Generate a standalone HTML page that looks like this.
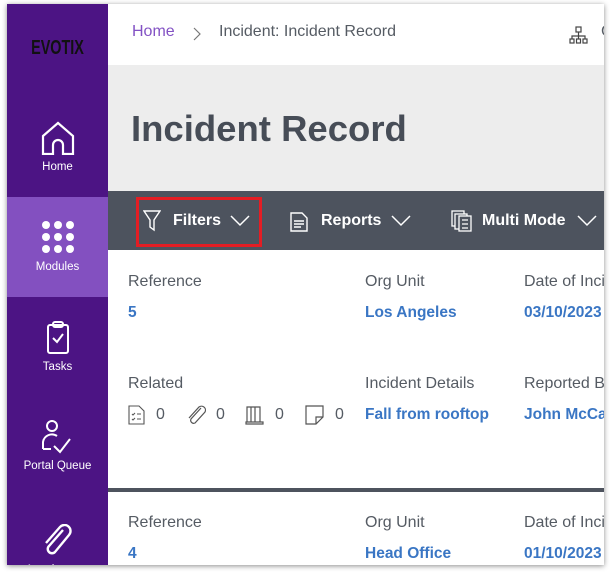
<!DOCTYPE html>
<html><head><style>
*{margin:0;padding:0;box-sizing:border-box}
body{width:615px;height:573px;background:#fff;font-family:"Liberation Sans",sans-serif;position:relative;overflow:hidden}
.frame{position:absolute;left:7px;top:4px;width:597px;height:561px;overflow:hidden;box-shadow:0 1px 5px rgba(0,0,0,.45);background:#fff}
.side{position:absolute;left:0;top:0;width:101px;height:561px;background:#4c1484}
.logo{position:absolute;left:0;width:101px;top:33px;text-align:center;font-weight:bold;font-size:20px;color:#111;transform:scaleX(.72)}
.nav{position:absolute;left:0;width:101px;text-align:center;color:#fff;font-size:11.5px}
.nav svg{display:block;margin:0 auto 6px}
.act{background:#8350c0}
.abs{position:absolute}
.lbl{color:#555b63;font-size:16px}
.val{color:#3a76c4;font-size:15.5px;font-weight:bold}
</style></head><body>
<div class="frame">
 <div class="side">
  <div class="logo">EVOTIX</div>
  <div class="nav" style="top:117px"><svg width="34" height="34" viewBox="0 0 34 34" fill="none" stroke="#fff" stroke-width="2.2"><path d="M2 15 L17 2 L32 15 V33 H22 V24 a5 5 0 0 0 -10 0 V33 H2 Z"/></svg>Home</div>
  <div class="nav act" style="top:193px;height:100px;padding-top:24px"><svg width="34" height="34" viewBox="0 0 34 34" fill="#fff"><circle cx="5" cy="4" r="4"/><circle cx="17" cy="4" r="4"/><circle cx="29" cy="4" r="4"/><circle cx="5" cy="16" r="4"/><circle cx="17" cy="16" r="4"/><circle cx="29" cy="16" r="4"/><circle cx="5" cy="28" r="4"/><circle cx="17" cy="28" r="4"/><circle cx="29" cy="28" r="4"/></svg>Modules</div>
  <div class="nav" style="top:317px"><svg width="24" height="34" viewBox="0 0 24 34" fill="none" stroke="#fff" stroke-width="2"><rect x="2" y="4" width="20" height="28" rx="2"/><rect x="7" y="1" width="10" height="5" rx="2"/><path d="M7 17 L11 21 L17 13"/></svg>Tasks</div>
  <div class="nav" style="top:416px"><svg width="34" height="34" viewBox="0 0 34 34" fill="none" stroke="#fff" stroke-width="2"><circle cx="11" cy="6" r="5"/><path d="M2 29 V22 a9 9 0 0 1 14 -6 M2 29 H10 M13 26 L19 32 L29 19"/></svg>Portal Queue</div>
  <div class="nav" style="top:520px"><svg width="34" height="34" viewBox="0 0 34 34" fill="none" stroke="#fff" stroke-width="2.4"><path d="M22 6 L8 22 a4 4 0 0 0 6 6 L28 11 a6 6 0 0 0 -9 -8 L5 19"/></svg>Attachments</div>
 </div>
 <div class="abs" style="left:101px;top:0;width:496px;height:61px;background:#fff"></div>
 <div class="abs" style="left:125px;top:19px;font-size:16px;color:#8352c4">Home</div>
 <svg class="abs" style="left:186px;top:23px" width="8" height="14" viewBox="0 0 8 14" fill="none" stroke="#777" stroke-width="1.2"><path d="M1 1L7 7L1 13"/></svg>
 <div class="abs" style="left:212px;top:19px;font-size:16px;color:#555b63">Incident: Incident Record</div>
 <svg class="abs" style="left:562px;top:22px" width="20" height="20" viewBox="0 0 20 20" fill="none" stroke="#444" stroke-width="1.2"><rect x="7" y="1" width="5" height="5"/><path d="M9.5 6V10M3 13V10H16V13M9.5 10V13"/><rect x="1" y="13" width="4" height="4"/><rect x="7.5" y="13" width="4" height="4"/><rect x="14" y="13" width="4" height="4"/></svg>
 <div class="abs" style="left:594px;top:19px;font-size:16px;color:#555b63">C</div>
 <div class="abs" style="left:101px;top:61px;width:496px;height:126px;background:#ededed"></div>
 <div class="abs" style="left:124px;top:104px;font-size:36.5px;font-weight:bold;color:#474d57">Incident Record</div>
 <div class="abs" style="left:101px;top:187px;width:496px;height:59px;background:#4d535e"></div>
 <div class="abs" style="left:129px;top:193px;width:126px;height:50px;border:3px solid #e41d24"></div>
 <svg class="abs" style="left:136px;top:206px" width="18" height="22" viewBox="0 0 18 22" fill="none" stroke="#fff" stroke-width="1.4"><path d="M1 1H17L11 10V20L7 17V10Z"/></svg>
 <div class="abs" style="left:166px;top:208px;color:#fff;font-weight:bold;font-size:16px">Filters</div>
 <svg class="abs" style="left:223px;top:211px" width="20" height="12" viewBox="0 0 20 12" fill="none" stroke="#fff" stroke-width="1.5"><path d="M1 1L10 10L19 1"/></svg>
 <svg class="abs" style="left:283px;top:208px" width="18" height="20" viewBox="0 0 18 20" fill="none" stroke="#fff" stroke-width="1.4"><path d="M1 1H12L17 6V19H1Z M4 9H14M4 12H14M4 15H11"/></svg>
 <div class="abs" style="left:314px;top:208px;color:#fff;font-weight:bold;font-size:16px">Reports</div>
 <svg class="abs" style="left:384px;top:211px" width="20" height="12" viewBox="0 0 20 12" fill="none" stroke="#fff" stroke-width="1.5"><path d="M1 1L10 10L19 1"/></svg>
 <svg class="abs" style="left:444px;top:206px" width="22" height="22" viewBox="0 0 22 22" fill="none" stroke="#fff" stroke-width="1.3"><rect x="1" y="1" width="12" height="15"/><rect x="4" y="4" width="12" height="15" fill="#4d535e"/><rect x="8" y="6" width="12" height="15" fill="#4d535e"/><path d="M11 10H17M11 14H17M11 18H17"/></svg>
 <div class="abs" style="left:475px;top:208px;color:#fff;font-weight:bold;font-size:16px">Multi Mode</div>
 <svg class="abs" style="left:570px;top:211px" width="20" height="12" viewBox="0 0 20 12" fill="none" stroke="#fff" stroke-width="1.5"><path d="M1 1L10 10L19 1"/></svg>

 <div class="abs lbl" style="left:121px;top:269px">Reference</div>
 <div class="abs lbl" style="left:358px;top:269px">Org Unit</div>
 <div class="abs lbl" style="left:517px;top:269px;white-space:nowrap">Date of Incident</div>
 <div class="abs val" style="left:121px;top:300px">5</div>
 <div class="abs val" style="left:358px;top:300px">Los Angeles</div>
 <div class="abs val" style="left:517px;top:300px">03/10/2023</div>
 <div class="abs lbl" style="left:121px;top:371px">Related</div>
 <div class="abs lbl" style="left:358px;top:371px">Incident Details</div>
 <div class="abs lbl" style="left:517px;top:371px;white-space:nowrap">Reported By</div>
 <svg class="abs" style="left:121px;top:401px" width="18" height="20" viewBox="0 0 18 20" fill="none" stroke="#555" stroke-width="1.1"><path d="M1 1H11L16 6V19H1Z M4 9L5 10L7 8M9 9H13M4 14L5 15L7 13M9 14H13"/></svg>
 <div class="abs lbl" style="left:149px;top:402px">0</div>
 <svg class="abs" style="left:179px;top:401px" width="22" height="20" viewBox="0 0 22 20" fill="none" stroke="#555" stroke-width="1.2"><path d="M15 3L5 14a3 3 0 0 0 4 4L19 7a4 4 0 0 0 -6 -5L3 13"/></svg>
 <div class="abs lbl" style="left:209px;top:402px">0</div>
 <svg class="abs" style="left:238px;top:401px" width="20" height="20" viewBox="0 0 20 20" fill="none" stroke="#555" stroke-width="1.2"><path d="M2 2H6V17H2ZM6 2H10V17M10 2L15 2V17M1 17H18V19H1Z"/></svg>
 <div class="abs lbl" style="left:268px;top:402px">0</div>
 <svg class="abs" style="left:298px;top:401px" width="20" height="20" viewBox="0 0 20 20" fill="none" stroke="#555" stroke-width="1.2"><path d="M1 1H18V12L11 19H1Z M11 19V12H18"/></svg>
 <div class="abs lbl" style="left:328px;top:402px">0</div>
 <div class="abs val" style="left:358px;top:402px">Fall from rooftop</div>
 <div class="abs val" style="left:517px;top:402px;white-space:nowrap">John McCarthy</div>
 <div class="abs" style="left:101px;top:484px;width:496px;height:4px;background:#4d535e"></div>
 <div class="abs lbl" style="left:121px;top:510px">Reference</div>
 <div class="abs lbl" style="left:358px;top:510px">Org Unit</div>
 <div class="abs lbl" style="left:517px;top:510px;white-space:nowrap">Date of Incident</div>
 <div class="abs val" style="left:121px;top:541px">4</div>
 <div class="abs val" style="left:358px;top:541px">Head Office</div>
 <div class="abs val" style="left:517px;top:541px">01/10/2023</div>
</div>
</body></html>
